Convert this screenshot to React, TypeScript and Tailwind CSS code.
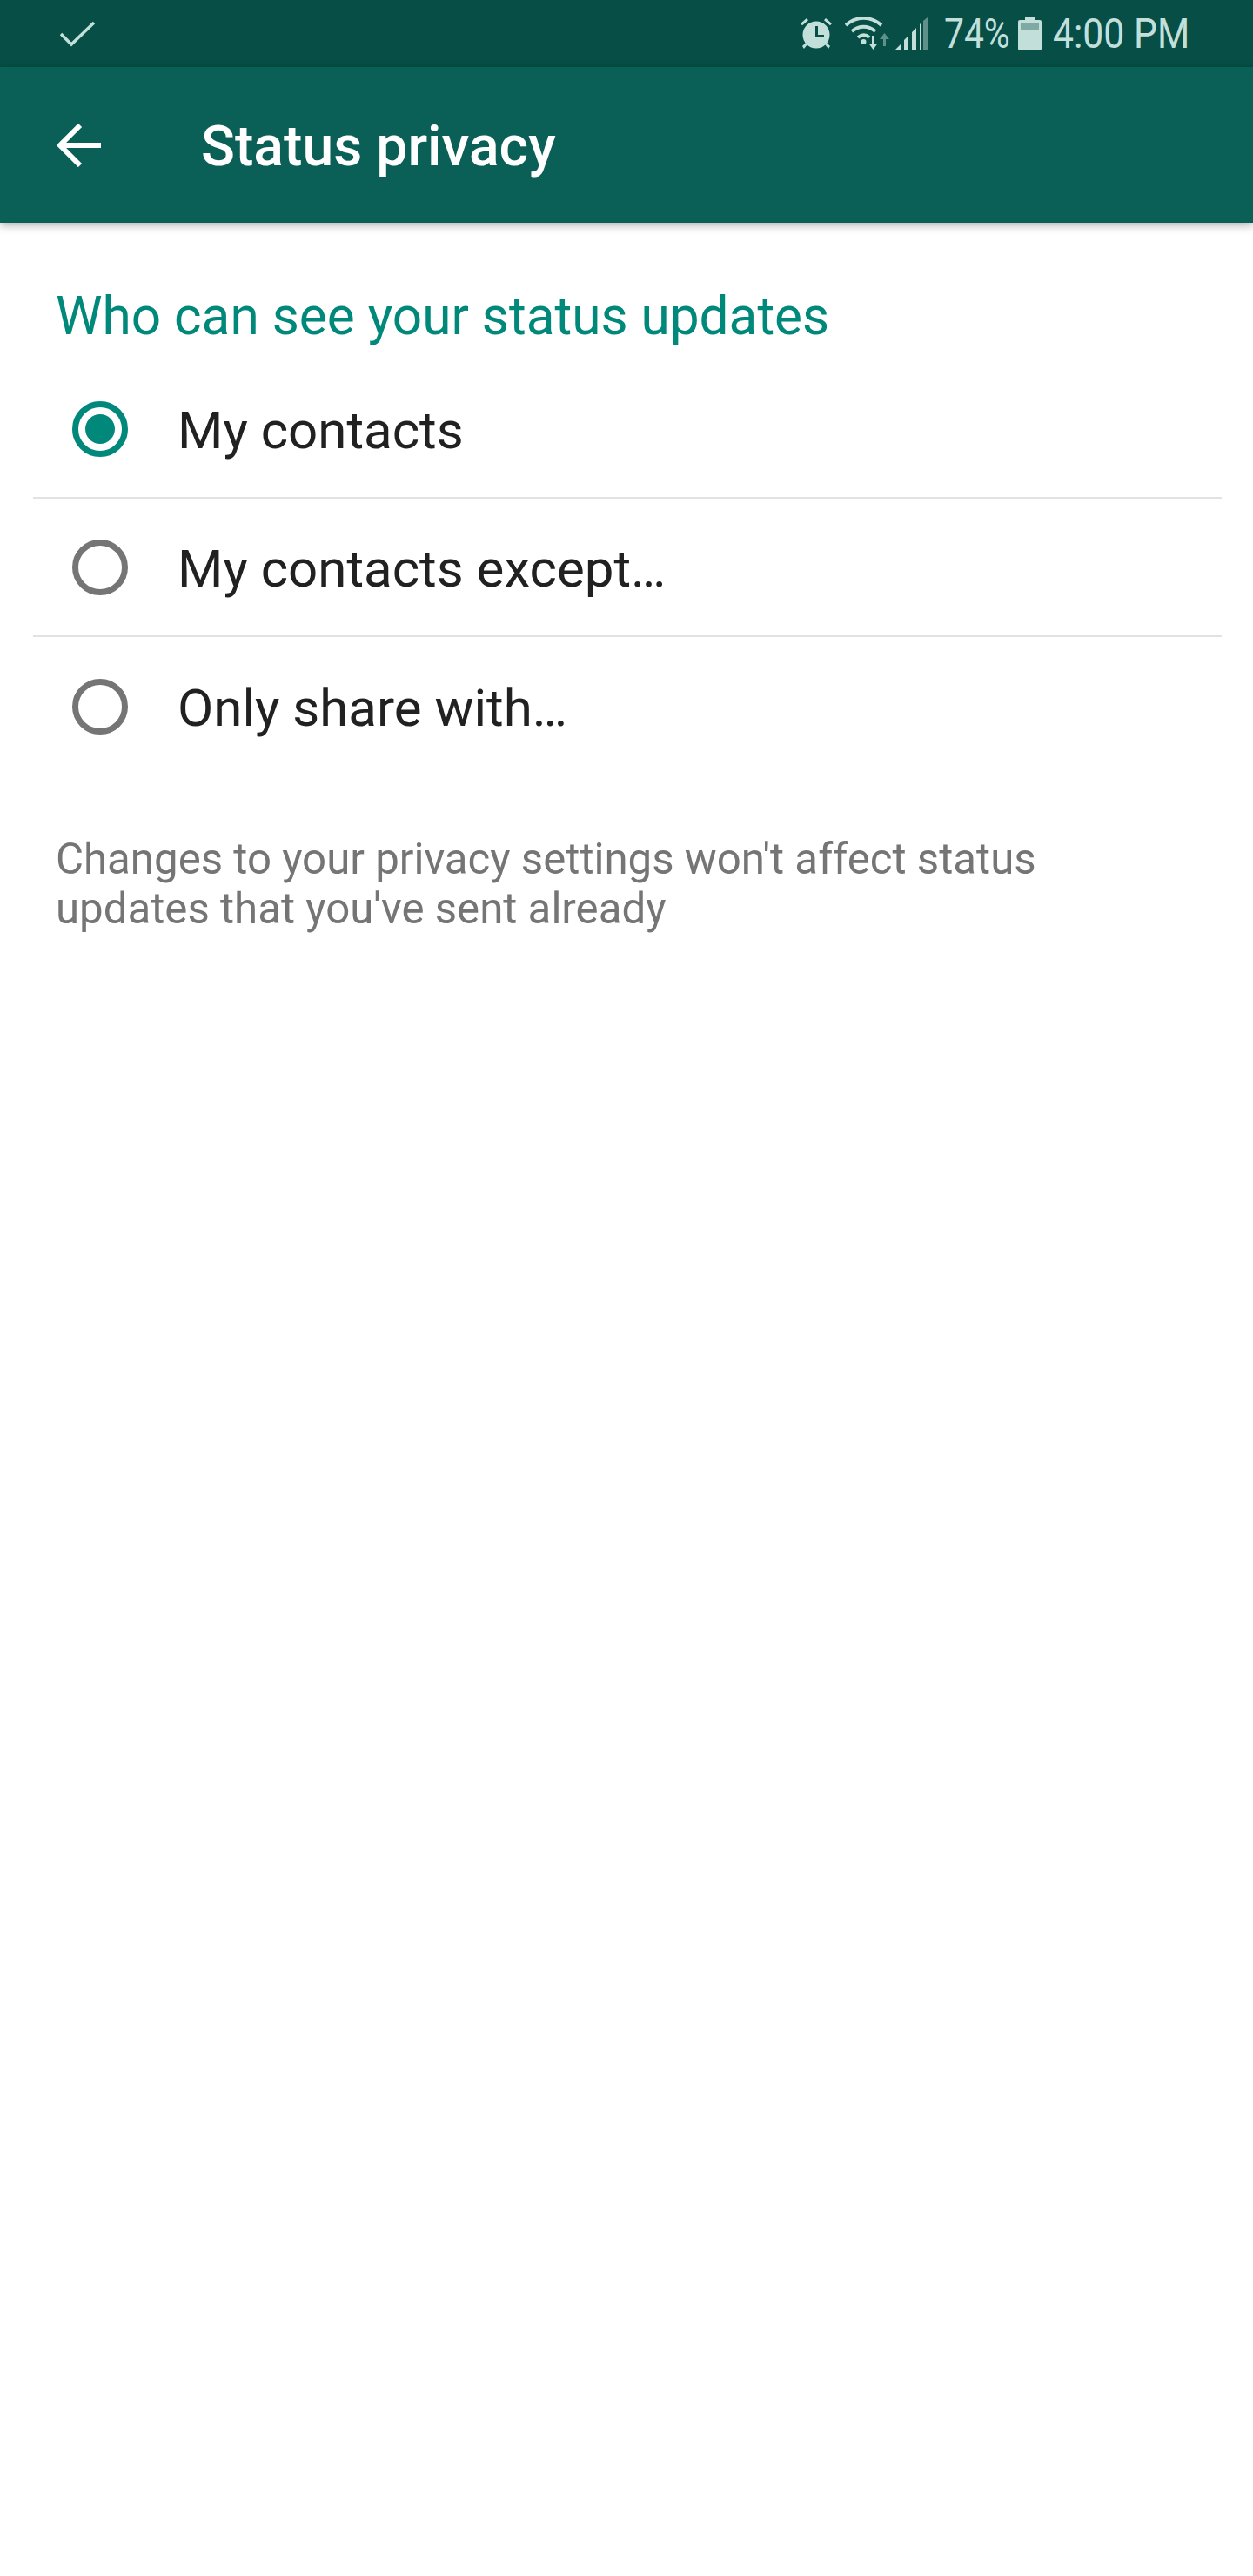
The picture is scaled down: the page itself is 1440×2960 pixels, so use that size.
const OPTIONS = [
  { label: 'My contacts', selected: true },
  { label: 'My contacts except…', selected: false },
  { label: 'Only share with…', selected: false },
];

function StatusIcons() {
  return (
    <div className="flex items-center">
      {/* alarm */}
      <svg viewBox="0 0 38 39" className="w-[38px] h-[39px]" fill="#c2dfda">
        <circle cx="19" cy="21" r="15.5" />
        <path d="M1 8l7-6 2 2.2-7 6zM37 8l-7-6-2 2.2 7 6zM3 34l4-4 2 2-4 5zM35 34l-4-4-2 2 4 5z" />
        <path d="M18 11h3v10h7v3H18z" fill="#064e46" />
      </svg>
      {/* wifi with data arrows */}
      <svg viewBox="0 0 52 39" className="w-[52px] h-[39px] ml-[14px]" fill="none">
        <g stroke="#c2dfda" strokeWidth="3.8">
          <path d="M1 10C13 -1 30 -1 42 10" />
          <path d="M8 17c8-7 19-7 27 0" />
          <path d="M15 24c4.500-3.500 9-3.500 13 0" />
        </g>
        <circle cx="21.500" cy="29" r="3" fill="#c2dfda" />
        <path d="M31 22h3v9h3.500l-5 7-5-7H31z" fill="#c2dfda" />
        <path d="M44 34h3v-8h4l-5.500-7-5.500 7h4z" fill="#5f918a" />
      </svg>
      {/* signal */}
      <svg viewBox="0 0 39 38" className="w-[39px] h-[38px] ml-[5px]" fill="#c2dfda">
        <path d="M0 38l8-8v8zM11 38V26l5-5v17zM20 38V17l5-5v26zM29 38V8l2-2v32z" />
        <path d="M33 38V4l5-4v38z" fill="#5f918a" />
      </svg>
      <span className="ml-[18px] w-[73px] text-[48px] leading-none whitespace-nowrap scale-x-[0.85] origin-left">74%</span>
      {/* battery */}
      <svg viewBox="0 0 27 38" className="w-[27px] h-[38px] ml-[12px]" fill="#c2dfda">
        <path d="M8 0h11v3h6a2 2 0 012 2v31a2 2 0 01-2 2H2a2 2 0 01-2-2V5a2 2 0 012-2h6z" />
        <rect x="3" y="7" width="21" height="7" fill="#7fa9a3" />
      </svg>
      <span className="ml-[13px] w-[154px] text-[48px] leading-none whitespace-nowrap scale-x-[0.89] origin-left">4:00 PM</span>
    </div>
  );
}

function Radio({ selected }: { selected: boolean }) {
  if (selected) {
    return (
      <span className="w-[64px] h-[64px] rounded-full border-[7px] border-[#00897b] flex items-center justify-center shrink-0">
        <span className="w-[34px] h-[34px] rounded-full bg-[#00897b]" />
      </span>
    );
  }
  return <span className="w-[64px] h-[64px] rounded-full border-[7px] border-[#757575] shrink-0" />;
}

export default function App() {
  return (
    <div className="w-[1440px] h-[2960px] bg-white font-['Roboto',sans-serif] overflow-hidden">
      {/* status bar */}
      <div className="h-[77px] bg-[#064e46] text-[#c2dfda] flex items-center justify-between pl-[69px] pr-[76px]">
        <svg viewBox="0 0 40 30" className="w-[40px] h-[30px]" fill="none" stroke="#c2dfda" strokeWidth="3.5">
          <path d="M1 15l12 12L39 2" />
        </svg>
        <StatusIcons />
      </div>

      {/* toolbar */}
      <div className="h-[179px] bg-[#0a5f56] flex items-center pl-[65px] shadow-[0_3px_10px_rgba(0,0,0,0.3)] relative">
        <svg viewBox="0 0 51 50" className="w-[51px] h-[50px] shrink-0" fill="none" stroke="#ffffff" strokeWidth="6">
          <path d="M51 25H4M27 2L4 25l23 23" />
        </svg>
        <h1 className="ml-[115px] pt-[3px] text-[64.300px] font-medium text-white leading-none">Status privacy</h1>
      </div>

      {/* options */}
      <div className="h-[158px] pl-[64px] flex items-end pb-[20px]">
        <h2 className="text-[60.300px] text-[#00897b] leading-none">Who can see your status updates</h2>
      </div>
      <div className="mx-[38px] w-[1366px]">
        {OPTIONS.map((o, i) => (
          <div
            key={o.label}
            className={`h-[159px] flex items-center pl-[45px] ${i < 2 ? 'border-b-2 border-[#e2e2e2]' : ''}`}
          >
            <Radio selected={o.selected} />
            <span className="ml-[57px] pt-[4px] text-[60px] text-[#212121] leading-none">{o.label}</span>
          </div>
        ))}
      </div>

      <p className="mt-[68px] px-[64px] text-[49.200px] leading-[57px] text-[#757575]">
        Changes to your privacy settings won't affect status
        <br />
        updates that you've sent already
      </p>
    </div>
  );
}
